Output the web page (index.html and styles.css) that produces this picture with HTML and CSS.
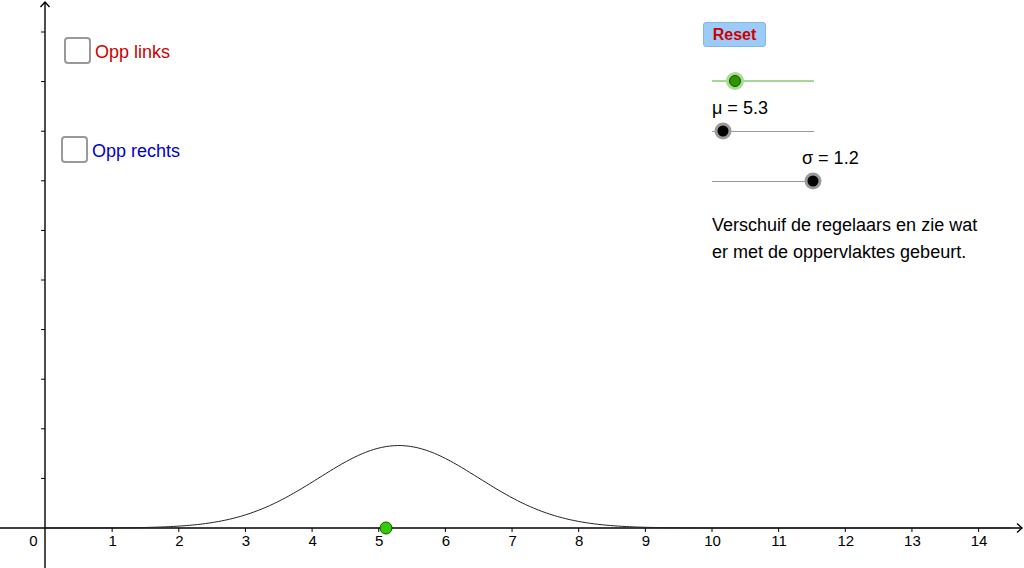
FILE: index.html
```html
<!DOCTYPE html>
<html lang="nl">

<head>
	<meta charset="UTF-8" />
	<title>Normale verdeling</title>
	<link rel="stylesheet" href="styles.css">
</head>

<body>
	<div class="applet">
		<svg class="graph" id="graph" width="1024" height="568" viewBox="0 0 1024 568">
			<g class="axes">
				<line x1="45" y1="2" x2="45" y2="568" />
				<polyline points="40.5,7 45,2 49.5,7" />
				<line x1="0" y1="528" x2="1022" y2="528" />
				<polyline points="1017,523.5 1022,528 1017,532.5" />
			</g>
			<g class="ticks" id="ticks"></g>
			<g class="labels" id="labels"></g>
			<path class="curve" id="curve" d="" />
			<circle class="point" cx="386" cy="528" r="6" />
		</svg>

		<div class="toggles">
			<label class="toggle toggle-links">
				<span class="box"></span>
				<span class="toggle-text">Opp links</span>
			</label>
			<label class="toggle toggle-rechts">
				<span class="box"></span>
				<span class="toggle-text">Opp rechts</span>
			</label>
		</div>

		<div class="controls">
			<button class="reset">Reset</button>
			<div class="slider slider-green">
				<div class="track"><span class="knob" style="left: 22.5%"></span></div>
			</div>
			<div class="slider-label">μ = 5.3</div>
			<div class="slider">
				<div class="track"><span class="knob" style="left: 10.8%"></span></div>
			</div>
			<div class="slider-label sigma">σ = 1.2</div>
			<div class="slider">
				<div class="track"><span class="knob" style="left: 99%"></span></div>
			</div>
			<p class="hint">Verschuif de regelaars en zie wat<br>er met de oppervlaktes gebeurt.</p>
		</div>
	</div>

	<script>
		const NS = "http://www.w3.org/2000/svg";
		const ox = 45.5, oy = 528, ux = 66.65, uy = 248;
		const mu = 5.3, sigma = 1.2;

		const ticks = document.getElementById('ticks');
		const labels = document.getElementById('labels');

		for (let k = 1; k <= 14; k++) {
			const x = ox + k * ux;
			const t = document.createElementNS(NS, 'line');
			t.setAttribute('x1', x); t.setAttribute('x2', x);
			t.setAttribute('y1', oy); t.setAttribute('y2', oy + 4);
			ticks.appendChild(t);
			const lbl = document.createElementNS(NS, 'text');
			lbl.setAttribute('x', x + 0.5);
			lbl.setAttribute('y', 546);
			lbl.textContent = k;
			labels.appendChild(lbl);
		}
		const zero = document.createElementNS(NS, 'text');
		zero.setAttribute('x', 33.5);
		zero.setAttribute('y', 546);
		zero.textContent = '0';
		labels.appendChild(zero);

		for (let k = 1; k <= 10; k++) {
			const y = oy - k * 49.6;
			const t = document.createElementNS(NS, 'line');
			t.setAttribute('x1', 41); t.setAttribute('x2', 45);
			t.setAttribute('y1', y); t.setAttribute('y2', y);
			ticks.appendChild(t);
		}

		// normale verdeling
		let d = '';
		for (let x = 0; x <= 14.5; x += 0.04) {
			const f = Math.exp(-((x - mu) ** 2) / (2 * sigma * sigma)) / (sigma * Math.sqrt(2 * Math.PI));
			const px = (ox + x * ux).toFixed(2);
			const py = (oy - f * uy).toFixed(2);
			d += (d ? ' L' : 'M') + px + ' ' + py;
		}
		document.getElementById('curve').setAttribute('d', d);
	</script>
</body>

</html>
```

FILE: styles.css
```css
body {
	margin: 0;
	background: #fff;
	font-family: "Liberation Sans", Arial, sans-serif;
	color: #000;
}

.applet {
	position: relative;
	width: 1024px;
	height: 568px;
	overflow: hidden;
	background: #fff;
}

.graph {
	display: block;
}

.axes line,
.axes polyline {
	stroke: #000;
	stroke-width: 1.4;
	fill: none;
}

.ticks line {
	stroke: #000;
	stroke-width: 1;
}

.labels text {
	font-family: "Liberation Sans", Arial, sans-serif;
	font-size: 15px;
	text-anchor: middle;
	fill: #000;
}

.curve {
	fill: none;
	stroke: #222;
	stroke-width: 1;
}

.point {
	fill: #33cc00;
	stroke: #1b4d05;
	stroke-width: 1;
}

.toggles {
	position: absolute;
	left: 61px;
	top: 37px;
	display: flex;
	flex-direction: column;
	align-items: flex-start;
}

.toggle {
	display: flex;
	align-items: flex-start;
	gap: 4px;
	font-size: 18px;
	line-height: 27px;
	cursor: pointer;
}

.toggle-text {
	padding-top: 2px;
}

.toggle-links {
	margin-left: 3px;
	color: #cc0000;
}

.toggle-rechts {
	margin-top: 70px;
	color: #0000cc;
}

.box {
	width: 23px;
	height: 23px;
	border: 2px solid #999;
	border-radius: 4px;
	background: #fff;
}

.controls {
	position: absolute;
	left: 703px;
	top: 22px;
	width: 300px;
}

.reset {
	display: block;
	width: 63px;
	height: 25px;
	padding: 0;
	background: #9dcbf8;
	border: 1px solid #86b6e6;
	border-radius: 3px;
	color: #cc0000;
	font-family: "Liberation Sans", Arial, sans-serif;
	font-weight: bold;
	font-size: 16px;
	cursor: pointer;
}

.slider {
	height: 16px;
	width: 102px;
	margin-left: 9px;
	display: flex;
	align-items: center;
	margin-top: 5px;
}

.slider-green {
	margin-top: 26px;
}

.track {
	position: relative;
	width: 100%;
	height: 1px;
	background: #999;
}

.slider-green .track {
	height: 2px;
	background: #a5d895;
}

.knob {
	position: absolute;
	top: 50%;
	width: 11px;
	height: 11px;
	border-radius: 50%;
	background: #000;
	box-shadow: 0 0 0 3px #9a9a9a;
	transform: translate(-50%, -50%);
}

.slider-green .knob {
	width: 10px;
	height: 10px;
	background: #2e9400;
	border: 1px solid #1a5200;
	box-shadow: 0 0 0 3px #a5dc92;
}

.slider-label {
	margin-top: 9px;
	margin-left: 9px;
	font-size: 18px;
	line-height: 20px;
}

.slider-label.sigma {
	margin-left: 99px;
}

.hint {
	margin: 23px 0 0 9px;
	font-size: 18px;
	line-height: 27px;
}
```
